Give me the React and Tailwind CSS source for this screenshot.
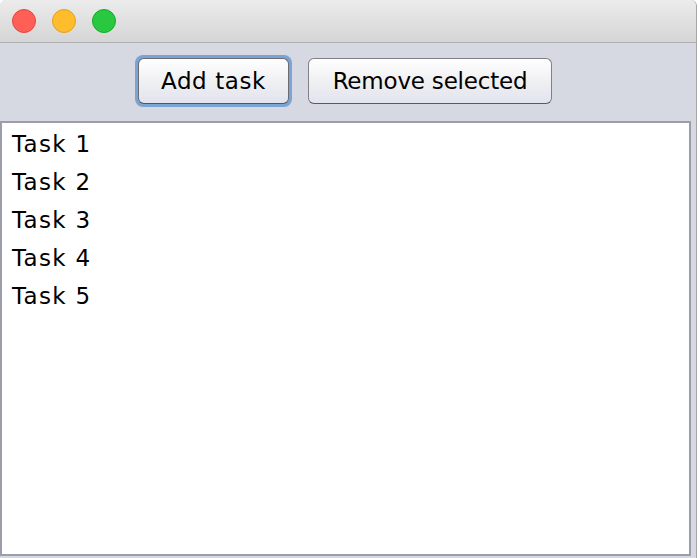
import React from 'react';

const tasks = ['Task 1', 'Task 2', 'Task 3', 'Task 4', 'Task 5'];

const App = () => {
  return (
    <div className="w-[698px] h-[558px] bg-white overflow-hidden" style={{ fontFamily: '"DejaVu Sans", sans-serif' }}>
      <div className="w-[697px] h-[558px] flex flex-col bg-[#d6d9e1] border-r border-[#a6a6a8] rounded-t-[6px] overflow-hidden">
        {/* Title bar */}
        <div className="h-[43px] shrink-0 flex items-center gap-4 pl-3 bg-gradient-to-b from-[#ececec] to-[#d5d5d5] border-b border-[#b1b1b1]">
          <span className="w-6 h-6 rounded-full bg-[#ff5f57] border border-[#e2463f]" />
          <span className="w-6 h-6 rounded-full bg-[#ffbd2e] border border-[#e1a116]" />
          <span className="w-6 h-6 rounded-full bg-[#28c940] border border-[#12ac28]" />
        </div>

        {/* Toolbar */}
        <div className="h-[78px] shrink-0 flex items-start justify-center gap-[19px] pt-[15px] pr-[6px]">
          <div className="rounded-[8px] p-[3px] bg-[#7ba4d4] -mt-[3px] -mx-[3px]">
            <button className="w-[151px] h-[46px] rounded-[6px] border border-[#6c6c70] border-b-[#55555a] bg-gradient-to-b from-[#ffffff] via-[#f0f0f3] to-[#e2e4ee] text-[23px] tracking-[0.6px] text-black">
              Add task
            </button>
          </div>
          <button className="w-[244px] h-[46px] rounded-[6px] border-[1.5px] border-[#808085] border-b-[#5a5a5f] bg-gradient-to-b from-[#ffffff] via-[#f0f0f3] to-[#e2e4ee] text-[23px] tracking-[-0.2px] text-black">
            Remove selected
          </button>
        </div>

        {/* List */}
        <div className="flex-1 mr-[5px] mb-[2px] bg-white border-2 border-[#9b9daa] pt-[2px] pl-[10px]">
          {tasks.map((t) => (
            <div key={t} className="h-[38px] flex items-center text-[23px] tracking-[1.3px] text-black leading-none">
              {t}
            </div>
          ))}
        </div>
      </div>
    </div>
  );
};

export default App;
